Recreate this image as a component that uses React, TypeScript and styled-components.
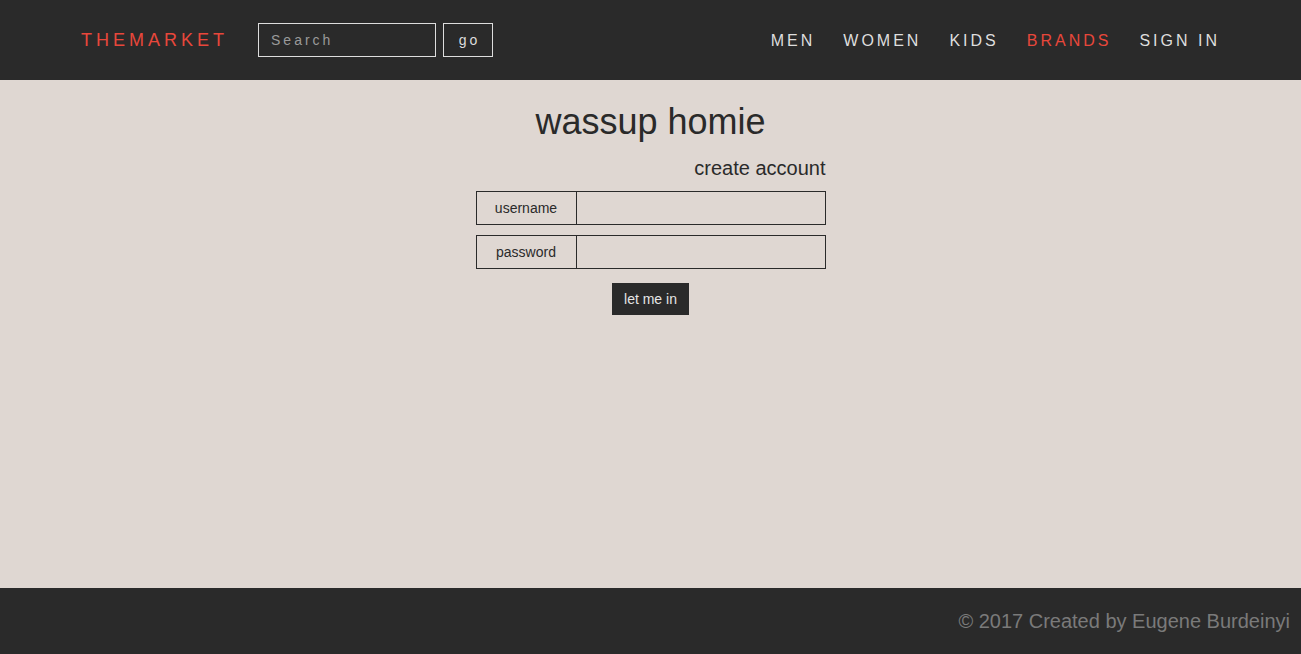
import React from "react";
import styled, { createGlobalStyle } from "styled-components";

const GlobalStyle = createGlobalStyle`
  html, body { margin: 0; padding: 0; height: 100%; }
  body {
    font-family: "Liberation Sans", Arial, sans-serif;
    background: #dfd7d2;
  }
  #root { min-height: 100vh; display: flex; flex-direction: column; }
  * { box-sizing: border-box; }
`;

const Page = styled.div`
  min-height: 100vh;
  display: flex;
  flex-direction: column;
`;

const Header = styled.header`
  height: 80px;
  background: #2a2a2a;
  display: flex;
  align-items: center;
  padding: 0 81px 0 81px;
`;

const Logo = styled.div`
  color: #e8473b;
  font-size: 18px;
  letter-spacing: 4px;
  margin-right: 30px;
`;

const SearchForm = styled.form`
  display: flex;
  align-items: center;
  gap: 7px;
`;

const SearchInput = styled.input`
  width: 178px;
  height: 34px;
  background: transparent;
  border: 1px solid #ddd;
  color: #ddd;
  font-family: "Liberation Sans", Arial, sans-serif;
  font-size: 14px;
  letter-spacing: 3px;
  padding: 0 12px;
  outline: none;
  &::placeholder { color: #9a9a9a; }
`;

const GoButton = styled.button`
  width: 50px;
  height: 34px;
  background: transparent;
  border: 1px solid #ddd;
  color: #ddd;
  font-family: "Liberation Sans", Arial, sans-serif;
  font-size: 14px;
  letter-spacing: 3px;
  padding: 0 0 0 3px;
`;

const Nav = styled.nav`
  margin-left: auto;
  display: flex;
  align-items: center;
  gap: 28px;
  padding-top: 1px;
`;

const NavLink = styled.a<{ $accent?: boolean }>`
  color: ${(p) => (p.$accent ? "#e8473b" : "#dedede")};
  font-size: 16px;
  letter-spacing: 3px;
  text-decoration: none;
  cursor: pointer;
`;

const Main = styled.main`
  flex: 1;
  background: #dfd7d2;
  display: flex;
  flex-direction: column;
  align-items: center;
  padding-top: 21px;
`;

const Title = styled.h1`
  margin: 0;
  font-size: 36px;
  font-weight: normal;
  color: #2a2a2a;
`;

const Form = styled.form`
  width: 350px;
  display: flex;
  flex-direction: column;
  margin-top: 14px;
`;

const CreateLink = styled.a`
  align-self: flex-end;
  font-size: 20px;
  color: #2a2a2a;
  text-decoration: none;
  margin-bottom: 11px;
  cursor: pointer;
`;

const Row = styled.div`
  display: flex;
  height: 34px;
  border: 1px solid #2a2a2a;
  margin-bottom: 10px;
`;

const Label = styled.label`
  width: 100px;
  flex: none;
  border-right: 1px solid #2a2a2a;
  display: flex;
  align-items: center;
  justify-content: center;
  font-size: 14px;
  color: #2a2a2a;
`;

const Field = styled.input`
  flex: 1;
  min-width: 0;
  border: none;
  background: transparent;
  outline: none;
  font-family: "Liberation Sans", Arial, sans-serif;
  font-size: 14px;
  padding: 0 8px;
`;

const Submit = styled.button`
  align-self: center;
  margin-top: 4px;
  width: 77px;
  height: 32px;
  background: #2a2a2a;
  color: #e5e5e5;
  border: none;
  font-family: "Liberation Sans", Arial, sans-serif;
  font-size: 14px;
  padding: 0;
`;

const Footer = styled.footer`
  height: 66px;
  background: #2a2a2a;
  display: flex;
  align-items: center;
  justify-content: flex-end;
  padding: 0 11px 0 0;
`;

const Copy = styled.p`
  margin: 0;
  color: #7a7a7a;
  font-size: 20px;
`;

export default function App() {
  return (
    <Page>
      <GlobalStyle />
      <Header>
        <Logo>THEMARKET</Logo>
        <SearchForm onSubmit={(e) => e.preventDefault()}>
          <SearchInput placeholder="Search" />
          <GoButton type="submit">go</GoButton>
        </SearchForm>
        <Nav>
          <NavLink>MEN</NavLink>
          <NavLink>WOMEN</NavLink>
          <NavLink>KIDS</NavLink>
          <NavLink $accent>BRANDS</NavLink>
          <NavLink>SIGN IN</NavLink>
        </Nav>
      </Header>
      <Main>
        <Title>wassup homie</Title>
        <Form onSubmit={(e) => e.preventDefault()}>
          <CreateLink>create account</CreateLink>
          <Row>
            <Label>username</Label>
            <Field type="text" />
          </Row>
          <Row>
            <Label>password</Label>
            <Field type="password" />
          </Row>
          <Submit type="submit">let me in</Submit>
        </Form>
      </Main>
      <Footer>
        <Copy>© 2017 Created by Eugene Burdeinyi</Copy>
      </Footer>
    </Page>
  );
}
